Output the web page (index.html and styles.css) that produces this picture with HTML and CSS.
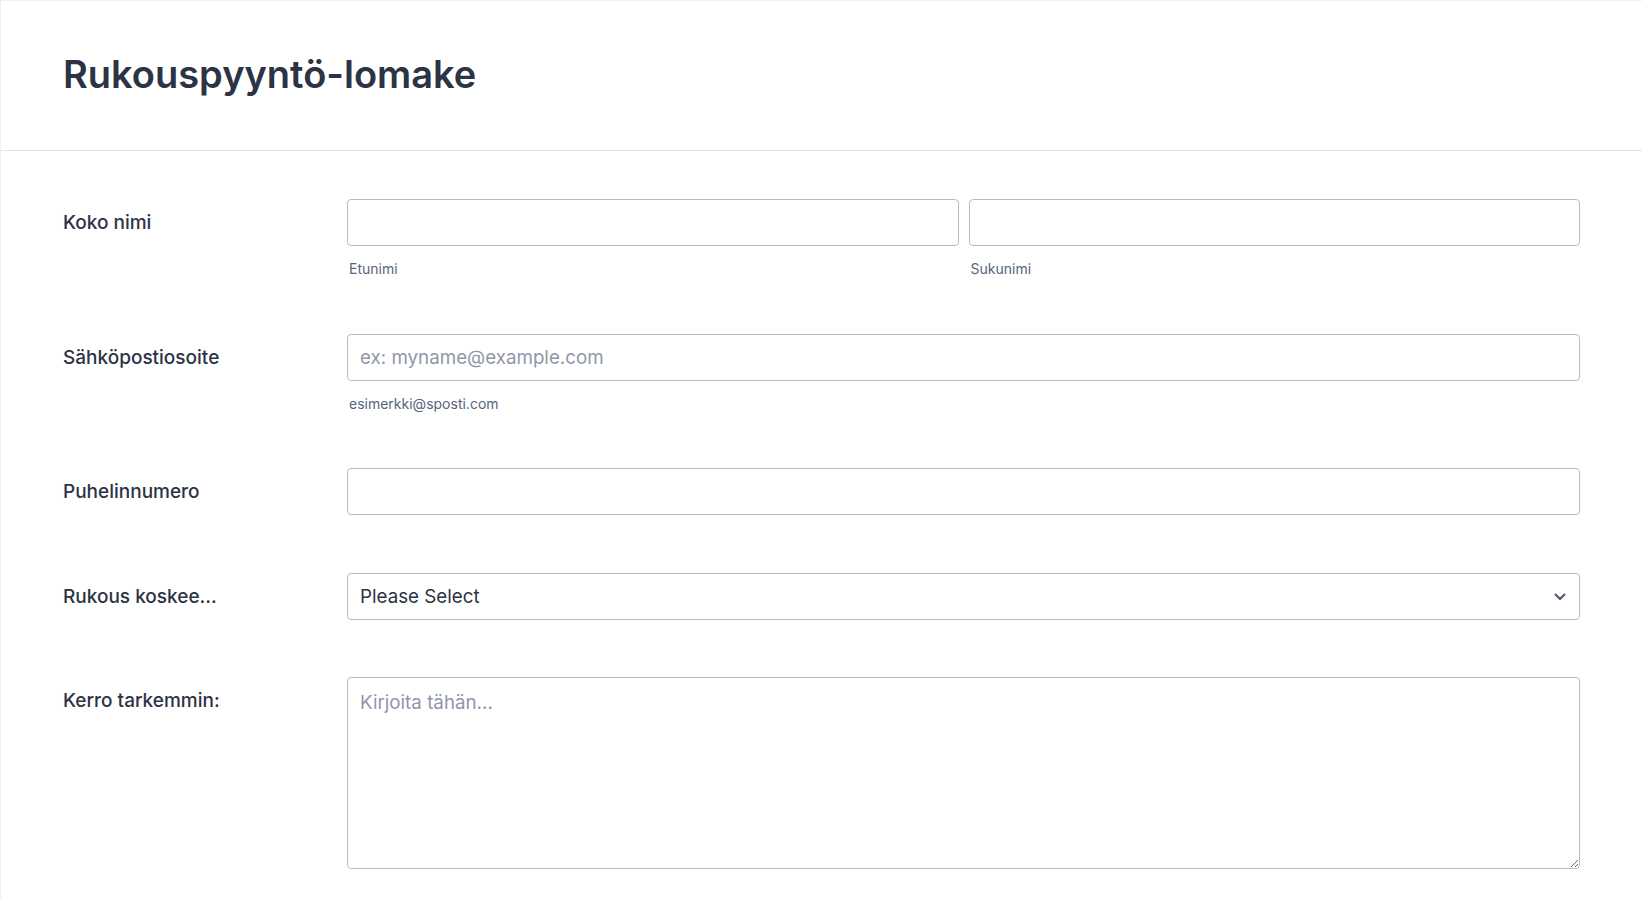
FILE: index.html
```html
<!DOCTYPE html>
<html lang="fi">
<head>
    <meta charset="UTF-8">
    <meta name="viewport" content="width=device-width, initial-scale=1.0">
    <title>Rukouspyyntö-lomake</title>

    <link rel="stylesheet" href="styles.css">
</head>
<body>
    <form class="form">
        <div class="form-header">
            <h1 class="form-title">Rukouspyyntö-lomake</h1>
        </div>

        <div class="form-body">
            <div class="row">
                <label class="row-label" for="first">Koko nimi</label>
                <div class="row-field split">
                    <div class="half">
                        <input class="field" type="text" id="first">
                        <span class="sublabel">Etunimi</span>
                    </div>
                    <div class="half">
                        <input class="field" type="text" id="last">
                        <span class="sublabel">Sukunimi</span>
                    </div>
                </div>
            </div>

            <div class="row">
                <label class="row-label" for="email">Sähköpostiosoite</label>
                <div class="row-field">
                    <input class="field" type="email" id="email" placeholder="ex: myname@example.com">
                    <span class="sublabel">esimerkki@sposti.com</span>
                </div>
            </div>

            <div class="row">
                <label class="row-label" for="phone">Puhelinnumero</label>
                <div class="row-field">
                    <input class="field" type="tel" id="phone">
                </div>
            </div>

            <div class="row">
                <label class="row-label" for="topic">Rukous koskee...</label>
                <div class="row-field">
                    <div class="select-wrap">
                        <select class="field select" id="topic">
                            <option>Please Select</option>
                        </select>
                        <svg class="chevron" width="12" height="8" viewBox="0 0 12 8">
                            <path d="M1.5 1.5 L6 6 L10.5 1.5" fill="none" stroke="#4a5468" stroke-width="2" stroke-linecap="round" stroke-linejoin="round"/>
                        </svg>
                    </div>
                </div>
            </div>

            <div class="row">
                <label class="row-label" for="details">Kerro tarkemmin:</label>
                <div class="row-field">
                    <textarea class="field area" id="details" placeholder="Kirjoita tähän..."></textarea>
                </div>
            </div>
        </div>
    </form>
</body>
</html>
```

FILE: styles.css
```css
body{
    margin: 0;
    background: #fff;
    font-family: Inter, "Noto Sans", sans-serif;
    color: #2c3345;
}

.form{
    border-top: 1px solid #eef0f4;
    border-left: 1px solid #eef0f4;
    min-height: 898px;
    box-sizing: border-box;
}

.form-header{
    padding: 47px 62px 50px 62px;
    border-bottom: 1px solid #e2e4ec;
}
.form-title{
    margin: 0;
    font-size: 38px;
    line-height: 52px;
    font-weight: 600;
    color: #2c3345;
}

.form-body{
    padding: 48px 62px 0 62px;
}

.row{
    display: flex;
    padding-bottom: 57.6px;
}
.row-label{
    width: 284px;
    flex-shrink: 0;
    font-size: 19px;
    line-height: 47px;
    font-weight: 500;
    color: #2c3345;
}
.row-field{
    flex: 1;
    display: flex;
    flex-direction: column;
}
.row-field.split{
    flex-direction: row;
    gap: 10px;
}
.half{
    flex: 1;
    display: flex;
    flex-direction: column;
}

.field{
    box-sizing: border-box;
    width: 100%;
    height: 47px;
    border: 1px solid #b8bdc9;
    border-radius: 4px;
    padding: 0 12px;
    font-family: Inter, "Noto Sans", sans-serif;
    font-size: 18.75px;
    color: #2c3345;
    background: #fff;
    outline: none;
}
.field::placeholder{
    color: #8f97a9;
}

.sublabel{
    margin-top: 15px;
    font-size: 14px;
    line-height: 15px;
    color: #57647e;
    padding-left: 2px;
}

.select-wrap{
    position: relative;
}
.select{
    appearance: none;
    -webkit-appearance: none;
}
.chevron{
    position: absolute;
    right: 14px;
    top: 20px;
    pointer-events: none;
}

.area{
    height: 192px;
    padding: 13px 12px;
    line-height: 24px;
    resize: vertical;
    display: block;
}
```
